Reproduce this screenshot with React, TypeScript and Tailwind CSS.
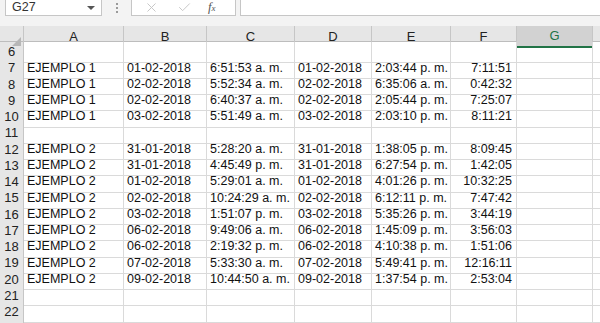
import { X, Check } from "lucide-react";

type Row = { n: number; cells: string[] };

const rows: Row[] = [
  { n: 6, cells: [] },
  { n: 7, cells: ["EJEMPLO 1", "01-02-2018", "6:51:53 a. m.", "01-02-2018", "2:03:44 p. m.", "7:11:51"] },
  { n: 8, cells: ["EJEMPLO 1", "02-02-2018", "5:52:34 a. m.", "02-02-2018", "6:35:06 a. m.", "0:42:32"] },
  { n: 9, cells: ["EJEMPLO 1", "02-02-2018", "6:40:37 a. m.", "02-02-2018", "2:05:44 p. m.", "7:25:07"] },
  { n: 10, cells: ["EJEMPLO 1", "03-02-2018", "5:51:49 a. m.", "03-02-2018", "2:03:10 p. m.", "8:11:21"] },
  { n: 11, cells: [] },
  { n: 12, cells: ["EJEMPLO 2", "31-01-2018", "5:28:20 a. m.", "31-01-2018", "1:38:05 p. m.", "8:09:45"] },
  { n: 13, cells: ["EJEMPLO 2", "31-01-2018", "4:45:49 p. m.", "31-01-2018", "6:27:54 p. m.", "1:42:05"] },
  { n: 14, cells: ["EJEMPLO 2", "01-02-2018", "5:29:01 a. m.", "01-02-2018", "4:01:26 p. m.", "10:32:25"] },
  { n: 15, cells: ["EJEMPLO 2", "02-02-2018", "10:24:29 a. m.", "02-02-2018", "6:12:11 p. m.", "7:47:42"] },
  { n: 16, cells: ["EJEMPLO 2", "03-02-2018", "1:51:07 p. m.", "03-02-2018", "5:35:26 p. m.", "3:44:19"] },
  { n: 17, cells: ["EJEMPLO 2", "06-02-2018", "9:49:06 a. m.", "06-02-2018", "1:45:09 p. m.", "3:56:03"] },
  { n: 18, cells: ["EJEMPLO 2", "06-02-2018", "2:19:32 p. m.", "06-02-2018", "4:10:38 p. m.", "1:51:06"] },
  { n: 19, cells: ["EJEMPLO 2", "07-02-2018", "5:33:30 a. m.", "07-02-2018", "5:49:41 p. m.", "12:16:11"] },
  { n: 20, cells: ["EJEMPLO 2", "09-02-2018", "10:44:50 a. m.", "09-02-2018", "1:37:54 p. m.", "2:53:04"] },
  { n: 21, cells: [] },
  { n: 22, cells: [] },
  { n: 23, cells: [] },
];

const cols = ["A", "B", "C", "D", "E", "F", "G"];
const grid = "grid grid-cols-[24px_100px_83px_88px_77px_79px_66px_76px_1fr]";

const App = () => {
  return (
    <div className="w-[600px] h-[323px] overflow-hidden bg-white text-[12.5px] text-[#111] font-['Liberation_Sans',Arial,sans-serif]">
      {/* formula bar */}
      <div className="h-[26px] bg-[#f3f3f3] flex items-start">
        <div className="ml-[5px] w-[97px] h-[16px] bg-white border border-t-0 border-[#c6c6c6] flex items-center pl-[6px] pr-[6px]">
          <span className="flex-1 text-[12.5px] text-[#333]">G27</span>
          <span className="w-0 h-0 border-l-[4px] border-r-[4px] border-t-[4px] border-l-transparent border-r-transparent border-t-[#555]" />
        </div>
        <div className="w-[29px] h-[15px] flex flex-col items-center justify-center gap-[2px]">
          <span className="w-[2px] h-[2px] bg-[#9a9a9a]" />
          <span className="w-[2px] h-[2px] bg-[#9a9a9a]" />
          <span className="w-[2px] h-[2px] bg-[#9a9a9a]" />
        </div>
        <div className="w-[105px] h-[16px] bg-white border border-t-0 border-[#c6c6c6] flex items-center">
          <X className="ml-[12px] w-[15px] h-[15px] text-[#c4c4c4]" strokeWidth={1.5} />
          <Check className="ml-[18px] w-[15px] h-[15px] text-[#c4c4c4]" strokeWidth={1.5} />
          <span className="ml-[16px] text-[12.5px] italic font-['Liberation_Serif',serif] text-[#555]">
            f<span className="text-[9px]">x</span>
          </span>
        </div>
        <div className="ml-[4px] flex-1 h-[16px] bg-white border border-t-0 border-r-0 border-[#c6c6c6]" />
      </div>

      {/* column headers */}
      <div className={`${grid} h-[16px] bg-[#e6e6e6] border-b border-[#bdbdbd]`}>
        <div className="border-r border-[#c6c6c6] relative">
          <svg className="absolute right-[2px] bottom-[2px]" width="9" height="9" viewBox="0 0 9 9">
            <polygon points="9,0 9,9 0,9" fill="#b7b7b7" />
          </svg>
        </div>
        {cols.map((c) => (
          <div
            key={c}
            className={
              c === "G"
                ? "bg-[#d2d2d2] border-r border-[#c6c6c6] border-b-2 border-b-[#217346] flex items-center justify-center text-[#217346] text-[13px]"
                : "border-r border-[#c6c6c6] flex items-center justify-center text-[13px] text-[#222]"
            }
          >
            {c}
          </div>
        ))}
        <div />
      </div>

      {/* rows */}
      {rows.map((r) => (
        <div key={r.n} className={`${grid} h-[16.25px]`}>
          <div className="bg-[#e6e6e6] border-r border-b border-[#c6c6c6] flex items-center justify-center text-[13px] text-[#222]">
            {r.n}
          </div>
          {cols.map((c, i) => (
            <div
              key={c}
              className={`border-r border-b border-[#dadada] flex items-center whitespace-nowrap overflow-hidden ${
                i === 5 ? "justify-end pr-[4px]" : "pl-[3px]"
              }`}
            >
              {r.cells[i] ?? ""}
            </div>
          ))}
          <div className="border-b border-[#dadada]" />
        </div>
      ))}
    </div>
  );
};

export default App;
